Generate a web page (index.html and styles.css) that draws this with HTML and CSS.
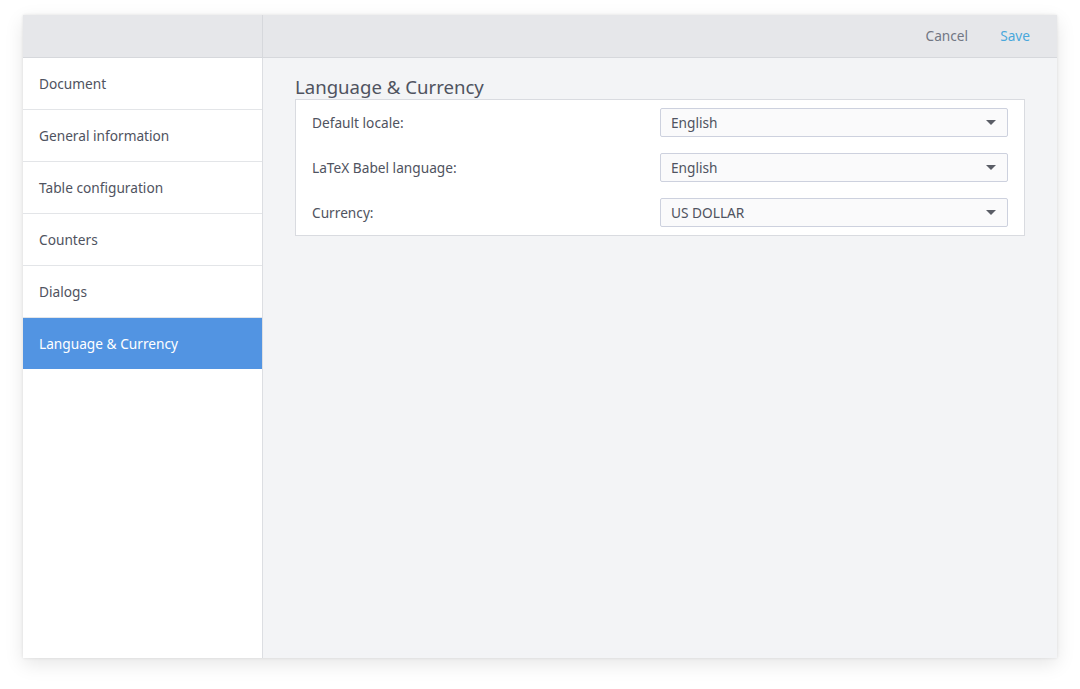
FILE: index.html
```html
<!DOCTYPE html>
<html>
<head>
<meta charset="utf-8">
<link rel="stylesheet" href="styles.css">
</head>
<body>
<div class="window">
  <div class="header">
    <div class="header-side"></div>
    <div class="header-main">
      <span class="btn cancel">Cancel</span>
      <span class="btn save">Save</span>
    </div>
  </div>
  <div class="body">
    <nav class="sidebar">
      <div class="nav-item">Document</div>
      <div class="nav-item">General information</div>
      <div class="nav-item">Table configuration</div>
      <div class="nav-item">Counters</div>
      <div class="nav-item">Dialogs</div>
      <div class="nav-item active">Language &amp; Currency</div>
    </nav>
    <main class="content">
      <h2 class="title">Language &amp; Currency</h2>
      <div class="panel">
        <div class="row">
          <span class="label">Default locale:</span>
          <div class="select"><span>English</span><span class="caret"></span></div>
        </div>
        <div class="row">
          <span class="label">LaTeX Babel language:</span>
          <div class="select"><span>English</span><span class="caret"></span></div>
        </div>
        <div class="row">
          <span class="label">Currency:</span>
          <div class="select"><span>US DOLLAR</span><span class="caret"></span></div>
        </div>
      </div>
    </main>
  </div>
</div>
</body>
</html>
```

FILE: styles.css
```css
* { box-sizing: border-box; }
html, body { margin: 0; padding: 0; background: #ffffff; }
body {
  font-family: "Noto Sans", "Open Sans", sans-serif;
  color: #4f5360;
  padding: 15px 23px 30px 23px;
}
.window {
  width: 1034px;
  height: 643px;
  display: flex;
  flex-direction: column;
  background: #f3f4f6;
  box-shadow: 0 6px 18px rgba(0,0,0,0.10), 0 0 3px rgba(0,0,0,0.10);
}
.header {
  height: 43px;
  display: flex;
  background: #e6e7ea;
  border-bottom: 1px solid #d6d8dc;
}
.header-side {
  width: 240px;
  border-right: 1px solid #d6d8dc;
}
.header-main {
  flex: 1;
  display: flex;
  justify-content: flex-end;
  align-items: center;
  gap: 32px;
  padding-right: 27px;
  padding-bottom: 2px;
  font-size: 13.7px;
}
.cancel { color: #727784; }
.save { color: #4aa8dc; }
.body {
  flex: 1;
  display: flex;
}
.sidebar {
  width: 240px;
  background: #ffffff;
  border-right: 1px solid #dcdee2;
  display: flex;
  flex-direction: column;
}
.nav-item {
  height: 52px;
  display: flex;
  align-items: center;
  padding-left: 16px;
  font-size: 13.7px;
  color: #4f5360;
  border-bottom: 1px solid #e3e5e8;
}
.nav-item.active {
  background: #5294e2;
  color: #ffffff;
  border-bottom: none;
  height: 51px;
}
.content {
  flex: 1;
  padding: 17px 32px 0 32px;
}
.title {
  margin: 0;
  font-weight: normal;
  font-size: 18.6px;
  line-height: 24px;
  color: #4f5360;
}
.panel {
  width: 730px;
  background: #ffffff;
  border: 1px solid #d9dbe0;
  padding: 8px 16px 8px 16px;
  display: flex;
  flex-direction: column;
  gap: 16px;
}
.row {
  display: flex;
  align-items: center;
  height: 29px;
}
.label {
  width: 348px;
  font-size: 13.7px;
  color: #4f5360;
}
.select {
  width: 348px;
  height: 29px;
  background: #fafafb;
  border: 1px solid #cdd1de;
  border-radius: 2px;
  display: flex;
  align-items: center;
  justify-content: space-between;
  padding: 0 11px 0 10px;
  font-size: 13.7px;
  color: #4f5360;
}
.caret {
  width: 0;
  height: 0;
  border-left: 5px solid transparent;
  border-right: 5px solid transparent;
  border-top: 5px solid #5a5d66;
}
```
